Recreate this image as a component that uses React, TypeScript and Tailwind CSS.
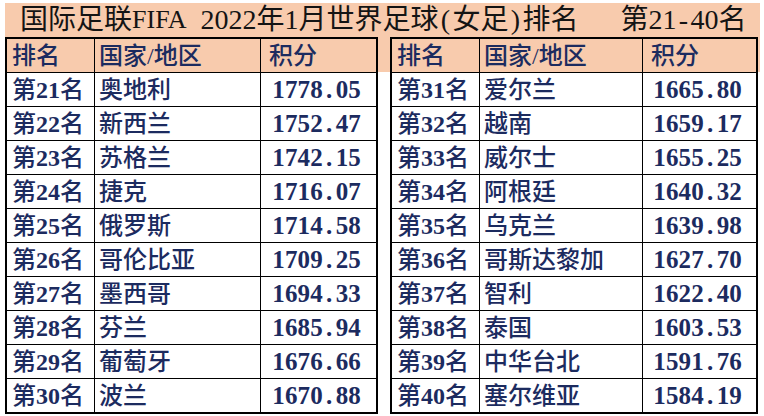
import React from "react";

const left = [
  ["21", "奥地利", "1778.05"],
  ["22", "新西兰", "1752.47"],
  ["23", "苏格兰", "1742.15"],
  ["24", "捷克", "1716.07"],
  ["25", "俄罗斯", "1714.58"],
  ["26", "哥伦比亚", "1709.25"],
  ["27", "墨西哥", "1694.33"],
  ["28", "芬兰", "1685.94"],
  ["29", "葡萄牙", "1676.66"],
  ["30", "波兰", "1670.88"],
];
const right = [
  ["31", "爱尔兰", "1665.80"],
  ["32", "越南", "1659.17"],
  ["33", "威尔士", "1655.25"],
  ["34", "阿根廷", "1640.32"],
  ["35", "乌克兰", "1639.98"],
  ["36", "哥斯达黎加", "1627.70"],
  ["37", "智利", "1622.40"],
  ["38", "泰国", "1603.53"],
  ["39", "中华台北", "1591.76"],
  ["40", "塞尔维亚", "1584.19"],
];

const cjk = "font-['Liberation_Serif','Noto_Sans_CJK_SC',serif]";

function Half({ text, cls }: { text: string; cls: string }) {
  return (
    <>
      {text.split("").map((c, i) => (
        <span key={i} className={`inline-block text-center ${cls}`}>
          {c === " " ? "\u00a0" : c}
        </span>
      ))}
    </>
  );
}

function Table({ rows, w1, w2, width }: { rows: string[][]; w1: string; w2: string; width: string }) {
  return (
    <div className={`${width} border-2 border-black bg-white text-[#1c2b5f] ${cjk}`}>
      <div className="flex h-[34px] border-b border-black bg-[#f8cbad] text-[24px] font-medium leading-none">
        <div className={`${w1} flex items-center border-r border-black pl-[5px]`}>排名</div>
        <div className={`${w2} flex items-center border-r border-black pl-[4px]`}>国家/地区</div>
        <div className="flex flex-1 items-center pl-[8px]">积分</div>
      </div>
      {rows.map((r, i) => (
        <div
          key={r[0]}
          className={`flex text-[24px] font-medium leading-none ${i < rows.length - 1 ? "h-[34px] border-b border-black" : "h-[33px]"}`}
        >
          <div className={`${w1} flex items-center border-r border-black pl-[5px] whitespace-nowrap`}>
            第<Half text={r[0]} cls="w-[12px] font-bold" />名
          </div>
          <div className={`${w2} flex items-center border-r border-black pl-[4px] whitespace-nowrap`}>{r[1]}</div>
          <div className="flex flex-1 items-center justify-center pr-[4px] text-[25px] font-bold whitespace-nowrap">
            <Half text={r[2]} cls="w-[12.7px]" />
          </div>
        </div>
      ))}
    </div>
  );
}

export default function App() {
  const L = "w-[14px] font-['Liberation_Serif',serif]";
  return (
    <div className="w-[764px] h-[416px] bg-white pt-[3px] pl-[5px]">
      <div className="w-[755px]">
        <div
          className={`flex h-[34px] items-center bg-[#f8cbad] pl-[15px] text-[28px] leading-none text-[#141414] whitespace-pre ${cjk}`}
        >
          <span>国际足联</span>
          <span className="text-[26px] font-['Liberation_Serif',serif]">FIFA</span>
          <Half text=" 2022" cls={L} />
          <span>年</span>
          <Half text="1" cls={L} />
          <span>月世界足球</span>
          <Half text="(" cls={L} />
          <span>女足</span>
          <Half text=")" cls={L} />
          <span>排名</span>
          <Half text="   " cls={L} />
          <span>第</span>
          <Half text="21-40" cls={L} />
          <span>名</span>
        </div>
        <div className="flex items-start">
          <Table rows={left} w1="w-[88px]" w2="w-[166px]" width="w-[373px]" />
          <div className="h-[35px] w-[12px] bg-[#f8cbad]" />
          <Table rows={right} w1="w-[88px]" w2="w-[163px]" width="w-[368px]" />
          <div className="h-[35px] flex-1 bg-[#f8cbad]" />
        </div>
      </div>
    </div>
  );
}
